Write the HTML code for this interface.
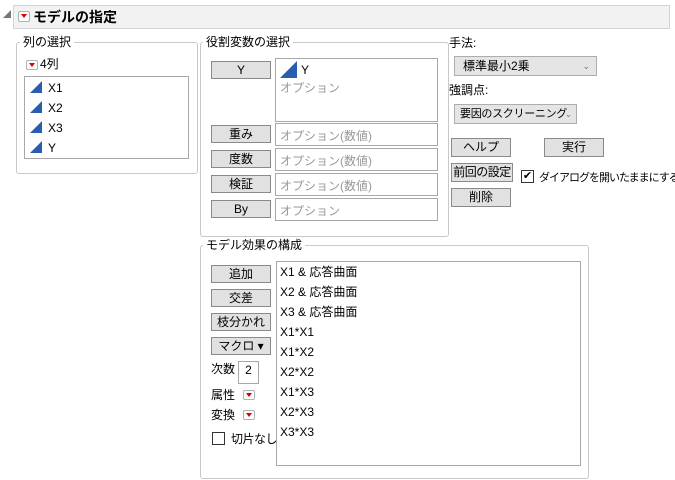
<!DOCTYPE html>
<html><head><meta charset="utf-8"><style>
body{margin:0;width:675px;height:480px;background:#fff;font-family:"Liberation Sans","Noto Sans CJK JP",sans-serif;font-size:12px;color:#000;position:relative;overflow:hidden;white-space:nowrap}
.a{position:absolute}
.grp{position:absolute;border:1px solid #c8c8c8;border-radius:3px}
.lg{position:absolute;background:#fff;padding:0 3px;font-size:12px;line-height:14px}
.btn{position:absolute;background:#e1e1e1;border:1px solid #8a8a8a;box-sizing:border-box;text-align:center;font-size:12px;line-height:16px}
.box{position:absolute;border:1px solid #a8a8a8;background:#fff;box-sizing:border-box}
.opt{color:#999}
.tri{display:inline-block;width:0;height:0;border-left:12px solid transparent;border-bottom:12px solid #2a5db0;vertical-align:-1px;margin-right:6px}
.rd{position:absolute;width:12px;height:10px;border:1px solid #b0b0b0;border-radius:2px;background:#fff;box-sizing:border-box}
.rd:after{content:"";position:absolute;left:2px;top:2px;border-left:3px solid transparent;border-right:3px solid transparent;border-top:4px solid #d00}
.dd{position:absolute;border:1px solid #adadad;background:#e5e5e5;box-sizing:border-box;line-height:18px;padding-left:8px}
</style></head><body>
<div class="a" style="left:3px;top:10px;width:0;height:0;border-left:8px solid transparent;border-bottom:8px solid #777"></div>
<div class="a" style="left:13px;top:5px;width:657px;height:24px;background:#f2f2f2;border:1px solid #d4d4d4;box-sizing:border-box"></div>
<div class="rd" style="left:18px;top:11px;width:12px;height:11px"></div>
<div class="a" style="left:33px;top:7px;font-weight:bold;font-size:14px;line-height:20px">モデルの指定</div>

<div class="grp" style="left:16px;top:42px;width:180px;height:130px"></div>
<div class="lg" style="left:20px;top:35px">列の選択</div>
<div class="rd" style="left:26px;top:60px"></div>
<div class="a" style="left:40px;top:57px;line-height:14px">4列</div>
<div class="box" style="left:24px;top:76px;width:165px;height:83px"></div>
<div class="a" style="left:30px;top:78px;line-height:20px">
<div><span class="tri"></span>X1</div><div><span class="tri"></span>X2</div><div><span class="tri"></span>X3</div><div><span class="tri"></span>Y</div></div>

<div class="grp" style="left:200px;top:42px;width:247px;height:193px"></div>
<div class="lg" style="left:203px;top:35px">役割変数の選択</div>
<div class="btn" style="left:211px;top:61px;width:60px;height:18px">Y</div>
<div class="box" style="left:275px;top:58px;width:163px;height:64px"></div>
<div class="a" style="left:280px;top:61px;line-height:18px"><span class="tri" style="border-left-width:17px;border-bottom-width:17px;vertical-align:-4px;margin-right:4px"></span>Y<br><span class="opt">オプション</span></div>
<div class="btn" style="left:211px;top:125px;width:60px;height:18px">重み</div>
<div class="box" style="left:275px;top:123px;width:163px;height:23px"><span class="opt a" style="left:4px;top:3px">オプション(数値)</span></div>
<div class="btn" style="left:211px;top:150px;width:60px;height:18px">度数</div>
<div class="box" style="left:275px;top:148px;width:163px;height:23px"><span class="opt a" style="left:4px;top:3px">オプション(数値)</span></div>
<div class="btn" style="left:211px;top:175px;width:60px;height:18px">検証</div>
<div class="box" style="left:275px;top:173px;width:163px;height:23px"><span class="opt a" style="left:4px;top:3px">オプション(数値)</span></div>
<div class="btn" style="left:211px;top:200px;width:60px;height:18px">By</div>
<div class="box" style="left:275px;top:198px;width:163px;height:23px"><span class="opt a" style="left:4px;top:3px">オプション</span></div>

<div class="a" style="left:449px;top:34px">手法:</div>
<div class="dd" style="left:454px;top:56px;width:143px;height:20px">標準最小2乗<span class="a" style="right:6px;top:0;color:#777;font-size:9px">⌄</span></div>
<div class="a" style="left:449px;top:81px">強調点:</div>
<div class="dd" style="left:454px;top:104px;width:123px;height:20px;padding-left:5px;font-size:11px;letter-spacing:-0.3px">要因のスクリーニング<span class="a" style="right:4px;top:0;color:#777;font-size:9px">⌄</span></div>
<div class="btn" style="left:451px;top:138px;width:60px;height:19px">ヘルプ</div>
<div class="btn" style="left:544px;top:138px;width:60px;height:19px">実行</div>
<div class="btn" style="left:451px;top:163px;width:62px;height:19px;letter-spacing:-0.5px">前回の設定</div>
<div class="box" style="left:521px;top:170px;width:13px;height:13px;border-color:#333;font-size:11px;line-height:11px;text-align:center">✔</div>
<div class="a" style="left:539px;top:169px;font-size:11px;letter-spacing:-1px">ダイアログを開いたままにする</div>
<div class="btn" style="left:451px;top:188px;width:60px;height:19px">削除</div>

<div class="grp" style="left:200px;top:245px;width:387px;height:232px"></div>
<div class="lg" style="left:203px;top:238px">モデル効果の構成</div>
<div class="btn" style="left:211px;top:265px;width:60px;height:18px">追加</div>
<div class="btn" style="left:211px;top:289px;width:60px;height:18px">交差</div>
<div class="btn" style="left:211px;top:313px;width:60px;height:18px">枝分かれ</div>
<div class="btn" style="left:211px;top:337px;width:60px;height:18px">マクロ ▾</div>
<div class="a" style="left:211px;top:360px">次数</div>
<div class="box" style="left:238px;top:361px;width:21px;height:23px;text-align:center;line-height:16px">2</div>
<div class="a" style="left:211px;top:386px">属性</div><div class="rd" style="left:243px;top:390px"></div>
<div class="a" style="left:211px;top:406px">変換</div><div class="rd" style="left:243px;top:410px"></div>
<div class="box" style="left:212px;top:432px;width:13px;height:13px;border-color:#333"></div>
<div class="a" style="left:231px;top:430px;letter-spacing:-0.5px">切片なし</div>
<div class="box" style="left:276px;top:261px;width:305px;height:205px"></div>
<div class="a" style="left:280px;top:262px;line-height:20px">X1 &amp; 応答曲面<br>X2 &amp; 応答曲面<br>X3 &amp; 応答曲面<br>X1*X1<br>X1*X2<br>X2*X2<br>X1*X3<br>X2*X3<br>X3*X3</div>
</body></html>
